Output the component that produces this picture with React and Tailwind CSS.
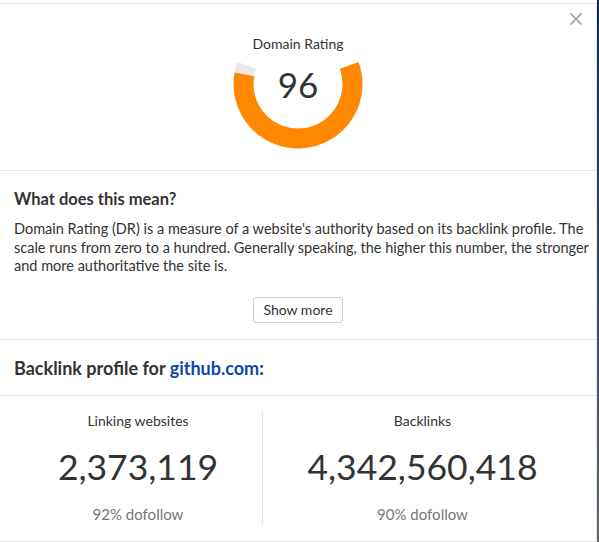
import React from 'react';

const Gauge = ({ value }) => {
  return (
    <div className="relative -mt-[35px] h-[130px] w-[130px]">
      <svg width="130" height="130" viewBox="0 0 130 130">
        <path
          d="M116.21 46.36 A54.5 54.5 0 1 1 11.41 55.07"
          fill="none"
          stroke="#ff8800"
          strokeWidth="20"
        />
        <path
          d="M11.41 55.07 A54.5 54.5 0 0 1 13.79 46.36"
          fill="none"
          stroke="#e9e9e9"
          strokeWidth="20"
        />
      </svg>
      <div className="absolute inset-0 flex items-center justify-center text-[35px] leading-none text-[#333]">
        {value}
      </div>
    </div>
  );
};

const Stat = ({ label, value, sub, className }) => (
  <div className={`flex flex-col items-center ${className}`}>
    <div className="mt-[1px] text-[14px] leading-[20px] text-[#333]">{label}</div>
    <div className="mt-[16px] text-[35.5px] leading-[40px] text-[#333]">{value}</div>
    <div className="mt-[17px] text-[15px] leading-[20px] text-[#777]">{sub}</div>
  </div>
);

export default function App() {
  return (
    <div className="flex h-[542px] w-[599px] bg-white font-['Lato',sans-serif]">
      <div className="mt-[3px] flex h-[539px] w-[597px] flex-col border-t border-b border-r border-[#e6e6e6]">
        {/* rating */}
        <div className="relative box-border flex h-[167px] flex-col items-center border-b border-[#e6e6e6] pt-[30px]">
          <button className="absolute right-[13px] top-[8px] text-[#9a9a9a]">
            <svg width="14" height="14" viewBox="0 0 14 14">
              <path d="M1.5 1.5 L12.5 12.5 M12.5 1.5 L1.5 12.5" stroke="currentColor" strokeWidth="1.6" />
            </svg>
          </button>
          <div className="h-[20px] text-[14px] leading-[20px] text-[#333]">Domain Rating</div>
          <Gauge value="96" />
        </div>

        {/* explanation */}
        <div className="box-border flex h-[169px] flex-col border-b border-[#e6e6e6] pl-[14px] pr-[6px] pt-[16px]">
          <h2 className="text-[16.5px] font-bold leading-[24px] text-[#333]">What does this mean?</h2>
          <p className="mt-[9px] text-[14.5px] leading-[18.5px] text-[#333]">
            Domain Rating (DR) is a measure of a website's authority based on its backlink profile. The
            scale runs from zero to a hundred. Generally speaking, the higher this number, the stronger
            and more authoritative the site is.
          </p>
          <div className="mt-[21px] flex justify-center pr-[8px]">
            <button className="h-[26px] w-[90px] rounded-[3px] border border-[#cfcfcf] text-[14px] text-[#333]">
              Show more
            </button>
          </div>
        </div>

        {/* backlink profile */}
        <div className="box-border flex h-[56px] items-center border-b border-[#e6e6e6] px-[14px]">
          <h2 className="text-[18px] font-bold leading-[24px] text-[#333]">
            Backlink profile for <a className="text-[#0b4aa8]">github.com</a>:
          </h2>
        </div>

        <div className="flex flex-1 px-[14px] pt-[14px] pb-[15px]">
          <Stat label="Linking websites" value="2,373,119" sub="92% dofollow" className="w-[248px]" />
          <Stat
            label="Backlinks"
            value="4,342,560,418"
            sub="90% dofollow"
            className="flex-1 border-l border-[#e6e6e6]"
          />
        </div>
      </div>
      <div className="w-[2px] bg-gradient-to-b from-[#0d2a5c] via-[#3a4a66] to-[#666]" />
    </div>
  );
}
